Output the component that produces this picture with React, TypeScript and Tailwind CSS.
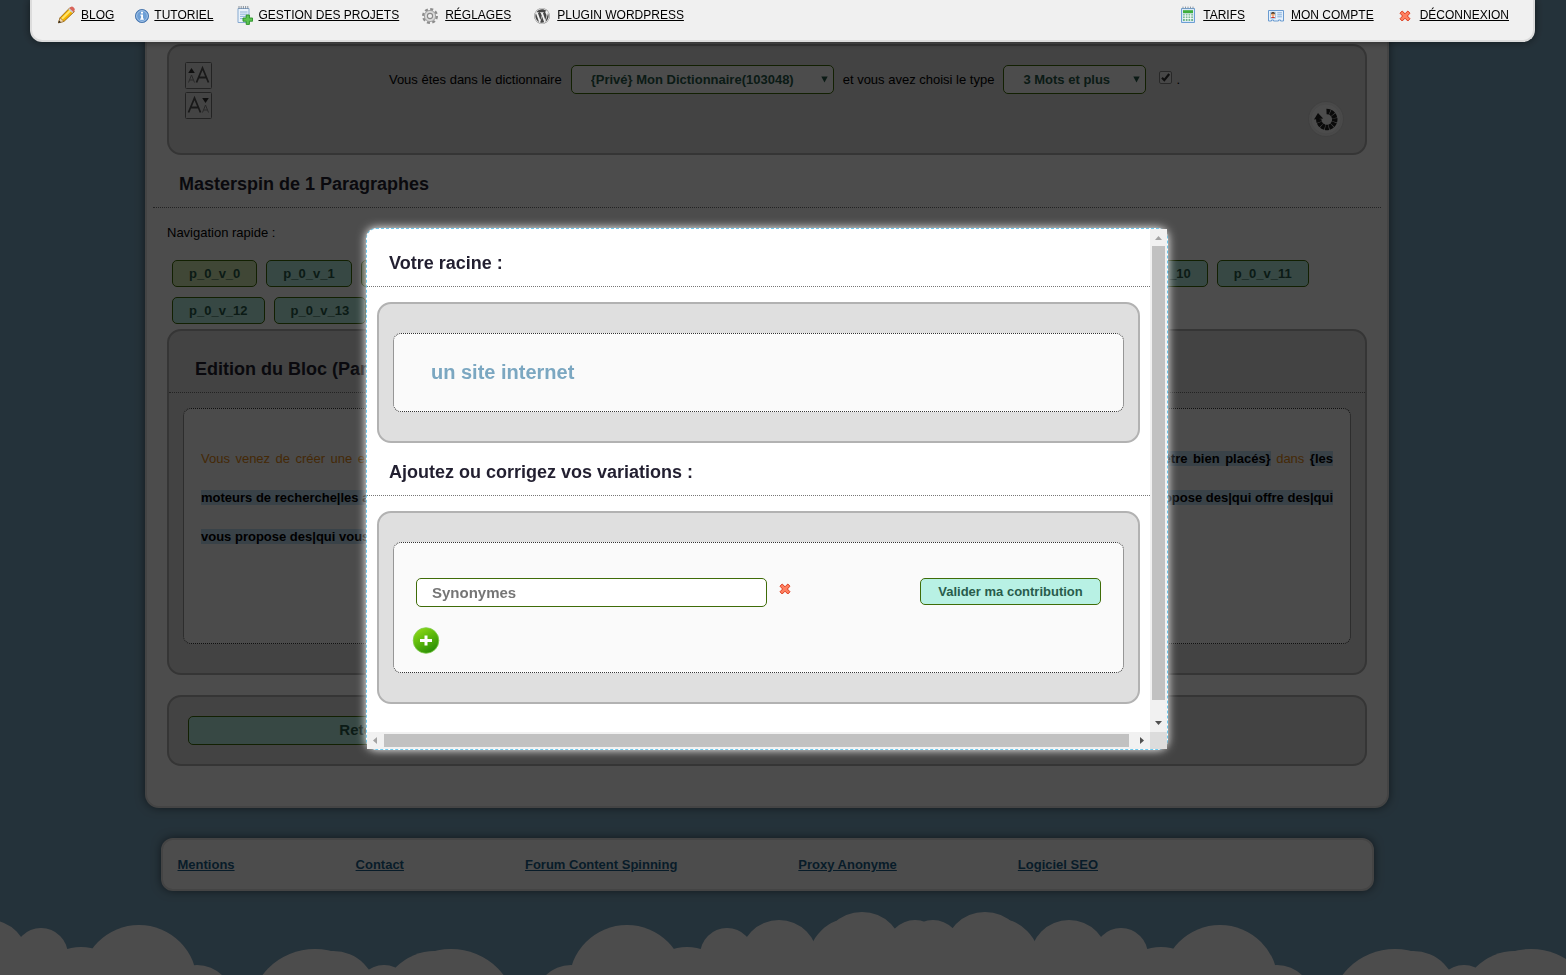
import React, { useState } from 'react';
import { FaWordpress } from 'react-icons/fa';

const variantes = [
  'p_0_v_0', 'p_0_v_1', 'p_0_v_2', 'p_0_v_3', 'p_0_v_4', 'p_0_v_5', 'p_0_v_6',
  'p_0_v_7', 'p_0_v_8', 'p_0_v_9', 'p_0_v_10', 'p_0_v_11', 'p_0_v_12', 'p_0_v_13',
];

const footerLinks = ['Mentions', 'Contact', 'Forum Content Spinning', 'Proxy Anonyme', 'Logiciel SEO'];

// [center x, top y, radius]
const clouds: [number, number, number][] = [
  [-11, 15, 39], [41, 23, 27], [81, 42, 50], [139, 20, 58], [197, 60, 36],
  [315, 44, 66], [333, 46, 44], [384, 60, 28], [451, 44, 66], [435, 46, 55],
  [571, 60, 36], [627, 20, 58], [687, 42, 50], [727, 23, 27], [779, 15, 39],
  [852, 13, 44], [862, 7, 41], [915, 15, 28], [933, 15, 28], [985, 7, 41],
  [996, 13, 44], [1069, 15, 39], [1121, 23, 27], [1161, 42, 50], [1220, 20, 58],
  [1277, 60, 36], [1395, 44, 66], [1413, 46, 44], [1464, 60, 28], [1531, 44, 66],
  [1515, 46, 55],
];

const PencilIcon = () => (
  <svg width="18" height="18" viewBox="0 0 18 18">
    <path d="M0.5 16.8 L2 11.8 L12 1.6 L16.4 5.6 L6 15.4 Z" fill="#f7b500" stroke="#8a5a10" strokeWidth="0.8" />
    <path d="M3.2 12.2 L12.4 3 L13.9 4.4 L4.6 13.6 Z" fill="#ffe56b" />
    <path d="M11 2.6 L12.4 1.2 Q14 0 15.4 1.2 L16.4 2.2 Q17.4 3.6 16.2 5 L15 6.4 Z" fill="#d9645a" />
    <path d="M10.3 3.3 L11.4 2.2 L15.4 6 L14.3 7.1 Z" fill="#c9ced6" />
    <path d="M0.5 16.8 L2 11.8 L6 15.4 Z" fill="#f3d7ae" stroke="#8a5a10" strokeWidth="0.5" />
    <path d="M0.3 17 L1.1 14.4 L3 16.2 Z" fill="#222" />
  </svg>
);

const InfoIcon = () => (
  <svg width="14" height="16" viewBox="0 0 14 16">
    <circle cx="7" cy="9" r="6.6" fill="#4f84c2" stroke="#3d6ea8" strokeWidth="0.8" />
    <circle cx="7" cy="9" r="5.4" fill="#6d9fd6" stroke="#b9d2ee" strokeWidth="0.8" />
    <path d="M6 4.8 h2 v1.8 h-2 z M5.4 7.6 h2.6 v4 h0.8 v1.2 h-3.6 v-1.2 h0.9 v-2.8 h-0.7 z" fill="#fff" />
  </svg>
);

const ProjectIcon = () => (
  <svg width="19" height="20" viewBox="0 0 19 20">
    <path d="M4 3.5 h11 v14 h-11 z" fill="#e9f2fb" stroke="#86a9d0" />
    <path d="M5 1 v3 M7.2 1 v3 M9.4 1 v3 M11.6 1 v3 M13.8 1 v3" stroke="#7d8894" strokeWidth="0.9" />
    <path d="M6 7 h7.5 M6 9.2 h7.5 M6 11.4 h7.5 M6 13.6 h5" stroke="#8fb2da" />
    <path d="M12.2 10 h3.2 v3 h3.2 v3.2 h-3.2 v3.2 h-3.2 v-3.2 h-3.2 v-3.2 h3.2 z" fill="#5cc352" stroke="#268e24" strokeWidth="0.9" />
  </svg>
);

const GearIcon = () => (
  <svg width="20" height="20" viewBox="0 0 20 20" className="mt-0.5">
    <circle cx="10" cy="10" r="6.8" fill="none" stroke="#8c8c8c" strokeWidth="2.4" strokeDasharray="3 2.34" />
    <circle cx="10" cy="10" r="5.6" fill="#d9d9d9" stroke="#9c9c9c" strokeWidth="0.9" />
    <circle cx="10" cy="10" r="2.6" fill="#f0f0f0" stroke="#8a8a8a" strokeWidth="1.1" />
  </svg>
);

const CalculatorIcon = () => (
  <svg width="20" height="18" viewBox="0 0 20 18">
    <path d="M3.5 2.5 h13 v14 h-13 z" fill="#d9e9f8" stroke="#6c9fd4" />
    <path d="M5 0.6 v2.4 M7.5 0.6 v2.4 M10 0.6 v2.4 M12.5 0.6 v2.4 M15 0.6 v2.4" stroke="#8898a8" />
    <path d="M5 4.2 h10 v3 h-10 z" fill="#3fae3c" />
    <path d="M5 8.2 h10 v6.8 h-10 z" fill="#6fb58c" />
    <path d="M5 10 h10 M5 12.4 h10 M7.3 8 v7 M10 8 v7 M12.7 8 v7" stroke="#fff" strokeWidth="0.9" />
  </svg>
);

const CardIcon = () => (
  <svg width="20" height="18" viewBox="0 0 20 18">
    <path d="M2.5 4.5 h15 v10.5 h-3 v-1 h-2 v1 h-5 v-1 h-2 v1 h-3 z" fill="#e4f0fc" stroke="#6a9bd0" />
    <path d="M4.5 6.3 h5 v6 h-5 z" fill="#fff" stroke="#7ba7d4" strokeWidth="0.6" />
    <circle cx="7" cy="8.6" r="1.8" fill="#e9a873" />
    <path d="M5 8 q0 -2 2 -2 q2 0 2 2 q-2 -1 -4 0 z" fill="#3b2a1c" />
    <path d="M5 12 q0 -1.6 2 -1.6 q2 0 2 1.6 z" fill="#c8372d" />
    <path d="M11.3 6.8 h4.6 M11.3 8.8 h4.6 M11.3 10.8 h4.6" stroke="#84aedb" />
  </svg>
);

const CrossShape = () => (
  <path
    d="M1 3.2 L3.2 1 L6 3.8 L8.8 1 L11 3.2 L8.4 6 L11 8.8 L8.8 11 L6 8.2 L3.2 11 L1 8.8 L3.6 6 Z"
    fill="#ff8060"
    stroke="#dc3c1e"
    strokeWidth="1"
    strokeLinejoin="round"
  />
);

const RoundArrowIcon = () => (
  <svg width="38" height="38" viewBox="0 0 38 38">
    <circle cx="19" cy="19" r="17.5" fill="#f4f4f4" stroke="#d6d6d6" />
    <circle cx="19" cy="19" r="15" fill="#fff" stroke="#f0f0f0" />
    <path d="M19.5 11.5 A8 8 0 1 1 11.8 19" fill="none" stroke="#222" strokeWidth="5.4" strokeDasharray="3.4 0.5" />
    <path d="M7 19.5 L11 13 L16.2 18.5 Z" fill="#222" />
  </svg>
);

const FontUpIcon = () => (
  <svg width="27" height="27" viewBox="0 0 27 27" fill="none" stroke="#555">
    <rect x="0.5" y="0.5" width="26" height="26" rx="1" fill="#e4e4e4" stroke="#777" />
    <path d="M11.5 20.5 L17.5 6 L23.5 20.5 M13.6 15.5 H21.4" strokeWidth="1.8" />
    <path d="M3.5 20.5 L6.5 13 L9.5 20.5 M4.6 18 H8.4" stroke="#888" />
    <path d="M3.2 11 L6.5 6 L9.8 11 Z" fill="#333" stroke="none" />
  </svg>
);

const FontDownIcon = () => (
  <svg width="27" height="27" viewBox="0 0 27 27" fill="none" stroke="#555">
    <rect x="0.5" y="0.5" width="26" height="26" rx="1" fill="#e4e4e4" stroke="#777" />
    <path d="M3.5 20.5 L9.5 6 L15.5 20.5 M5.6 15.5 H13.4" strokeWidth="1.8" />
    <path d="M17.5 20.5 L20.5 13 L23.5 20.5 M18.6 18 H22.4" stroke="#888" />
    <path d="M17.2 6 L23.8 6 L20.5 11 Z" fill="#333" stroke="none" />
  </svg>
);

interface NavItemProps {
  icon: React.ReactNode;
  children: React.ReactNode;
}

const NavItem: React.FC<NavItemProps> = ({ icon, children }) => (
  <a href="#" className="flex h-5 items-center gap-[5px] whitespace-nowrap">
    {icon}
    <span className="underline">{children}</span>
  </a>
);

const TopBar = () => (
  <nav className="fixed right-[31px] left-[30px] top-0 z-20 flex h-[42px] justify-between rounded-b-xl border-2 border-t-0 border-[#dcdcdc] bg-[#f0f0f0] px-6 pt-[5px] text-[12px] text-black shadow-[0_0_8px_rgba(0,0,0,0.5)]">
    <div className="flex gap-[21px] pl-0.5">
      <NavItem icon={<PencilIcon />}>BLOG</NavItem>
      <NavItem icon={<InfoIcon />}>TUTORIEL</NavItem>
      <NavItem icon={<ProjectIcon />}>GESTION DES PROJETS</NavItem>
      <NavItem icon={<GearIcon />}>RÉGLAGES</NavItem>
      <NavItem icon={<FaWordpress className="mt-0.5 h-4 w-5 text-[#464646]" />}>PLUGIN WORDPRESS</NavItem>
    </div>
    <div className="flex gap-[21px]">
      <NavItem icon={<CalculatorIcon />}>TARIFS</NavItem>
      <NavItem icon={<CardIcon />}>MON COMPTE</NavItem>
      <NavItem
        icon={
          <svg width="20" height="14" viewBox="-4 -2 20 14">
            <CrossShape />
          </svg>
        }
      >
        DÉCONNEXION
      </NavItem>
    </div>
  </nav>
);

interface SelectBoxProps {
  label: string;
  value: string;
  className: string;
}

const SelectBox: React.FC<SelectBoxProps> = ({ label, value, className }) => (
  <span className={`relative inline-block ${className}`}>
    <select
      aria-label={label}
      className="h-[29px] w-full appearance-none rounded-[5px] border border-[#3f6c08] bg-white pl-[19px] text-[13px] font-bold text-[#285c4b]"
    >
      <option>{value}</option>
    </select>
    <svg className="pointer-events-none absolute top-[11px] right-[6px]" width="7" height="7" viewBox="0 0 7 7">
      <path d="M0.3 0.5 H6.7 L3.5 6.5 Z" fill="#285c4b" />
    </svg>
  </span>
);

const DictionaryBox = () => (
  <section className="flex h-[111px] items-start rounded-[14px] border-2 border-[#b2b2b2] bg-[#dfdfdf] px-4 pt-4">
    <div className="flex flex-col gap-[3px]">
      <button aria-label="Agrandir le texte"><FontUpIcon /></button>
      <button aria-label="Réduire le texte"><FontDownIcon /></button>
    </div>
    <div className="mt-[3px] flex flex-1 items-center justify-center gap-[9px] pl-[50px] text-[13px]">
      <span>Vous êtes dans le dictionnaire</span>
      <SelectBox label="Dictionnaire" value="{Privé} Mon Dictionnaire(103048)" className="w-[263px]" />
      <span>et vous avez choisi le type</span>
      <SelectBox label="Type" value="3 Mots et plus" className="w-[143px]" />
      <label className="ml-1 flex items-end gap-1">
        <span className="relative mb-1 block h-[13px] w-[13px]">
          <input
            type="checkbox"
            defaultChecked
            aria-label="Activer"
            className="peer block h-[13px] w-[13px] appearance-none rounded-[2px] border border-[#888] bg-[#eee]"
          />
          <svg className="pointer-events-none absolute inset-0 hidden peer-checked:block" width="13" height="13" viewBox="0 0 13 13">
            <path d="M3 6.8 L5.3 9.2 L10.2 3" fill="none" stroke="#333" strokeWidth="2.2" />
          </svg>
        </span>
        <span className="leading-4">.</span>
      </label>
    </div>
    <button aria-label="Recharger" className="mt-[38px] mr-1">
      <RoundArrowIcon />
    </button>
  </section>
);

const Mark: React.FC<{ children: React.ReactNode }> = ({ children }) => (
  <b className="bg-[#c0dcf2] text-black">{children}</b>
);

const EditionBox = () => (
  <section className="mt-[5px] rounded-[14px] border-2 border-[#b2b2b2] bg-[#dfdfdf] pb-[29px]">
    <h2 className="h-[62px] border-b border-dotted border-[#777] px-[26px] pt-6 text-[18px] leading-7 font-bold text-[#221f30]">
      Edition du Bloc (Paragraphe 0)
    </h2>
    <div className="mx-3.5 mt-[15px] min-h-[236px] rounded-[8px] border border-dotted border-[#333] bg-[#fafafa] px-[17px] pt-[30px]">
      <p className="text-justify text-[13px] leading-[39px] text-[#e68a14]">
        Vous venez de créer une entreprise et vous souhaitez <Mark>{'{créer un site internet|avoir un site web}'}</Mark> pour{' '}
        <Mark>{'{être plus visibles|être présents|être bien référencés|être bien placés}'}</Mark> dans{' '}
        <Mark>
          {'{les moteurs de recherche|les annuaires de recherche|les résultats de recherche}'}
        </Mark>{' '}
        . Voici une agence{' '}
        <Mark>
          {'{spécialisée en référencement qui vous y aide et qui vous propose des|qui offre des|qui vous propose des|qui vous offre des}'}
        </Mark>{' '}
        services.
      </p>
    </div>
  </section>
);

const MainPanel = () => (
  <main className="w-full max-w-[1244px] rounded-b-[14px] border-2 border-t-0 border-[#e4e4e4] bg-white px-5 pt-11 pb-10 shadow-[0_0_10px_rgba(0,0,0,0.5)]">
    <DictionaryBox />
    <h2 className="-mx-3.5 h-[53px] border-b border-dotted border-[#777] px-[26px] pt-[15px] text-[18px] leading-7 font-bold text-[#221f30]">
      Masterspin de 1 Paragraphes
    </h2>
    <p className="mt-[15px] text-[13px] leading-5">Navigation rapide :</p>
    <div className="mt-[17px] flex flex-wrap gap-x-[9px] gap-y-2.5 pl-[5px]">
      {variantes.map((v, i) => (
        <button
          key={v}
          className={`h-[27px] rounded-[5px] border border-[#3f6c08] px-4 text-[13px] font-bold text-[#285c4b] ${
            i === 0 || i === 2 ? 'bg-[#d8efb4]' : 'bg-[#b8f1e4]'
          }`}
        >
          {v}
        </button>
      ))}
    </div>
    <EditionBox />
    <section className="mt-5 rounded-[14px] border-2 border-[#b2b2b2] bg-[#dfdfdf] px-[19px] py-[19px]">
      <button className="block h-[29px] w-[351px] rounded-[5px] border border-[#3f6c08] bg-[#b8f1e4] text-[15px] font-bold text-[#285c4b]">
        Retour
      </button>
    </section>
  </main>
);

const Footer = () => (
  <footer className="mt-[30px] flex h-[53px] w-full max-w-[1213px] items-center gap-[121px] rounded-xl border-2 border-[#e4e4e4] bg-white px-[15px] text-[13px] font-bold text-[#1d5f8a] shadow-[0_0_10px_rgba(0,0,0,0.5)]">
    {footerLinks.map((l) => (
      <a key={l} href="#" className="underline">{l}</a>
    ))}
  </footer>
);

const CloudBand = () => (
  <svg className="mt-auto block h-[70px] w-full" viewBox="0 0 1566 70" preserveAspectRatio="xMidYMax slice" fill="#fff">
    {clouds.map(([x, top, r], i) => (
      <circle key={i} cx={x} cy={top + r} r={r} />
    ))}
    <rect x="600" y="50" width="650" height="20" />
    <rect x="0" y="50" width="160" height="20" />
  </svg>
);

interface ModalHeadingProps {
  className: string;
  children: React.ReactNode;
}

const ModalHeading: React.FC<ModalHeadingProps> = ({ className, children }) => (
  <h2 className={`border-b border-dotted border-[#777] px-[22px] pb-[9px] text-[18px] leading-7 font-bold text-[#221f30] ${className}`}>
    {children}
  </h2>
);

const ModalBox: React.FC<{ children: React.ReactNode }> = ({ children }) => (
  <section className="mx-2.5 mt-[15px] rounded-[14px] border-2 border-[#b2b2b2] bg-[#dfdfdf] px-3.5 py-[29px]">
    <div className="rounded-[8px] border border-dotted border-[#333] bg-[#fafafa]">{children}</div>
  </section>
);

const SynonymModal = () => {
  const [rows, setRows] = useState<string[]>(['']);

  const updateRow = (index: number, value: string) => {
    setRows(rows.map((r, i) => (i === index ? value : r)));
  };

  return (
    <div
      role="dialog"
      aria-label="Variations"
      className="grid h-[522px] w-[802px] grid-cols-[1fr_17px] grid-rows-[1fr_17px] rounded-[10px] border border-dashed border-[#6cc8ec] bg-white shadow-[0_0_10px_#fff]"
    >
      <div className="overflow-hidden">
        <ModalHeading className="pt-5">Votre racine :</ModalHeading>
        <ModalBox>
          <p className="px-[37px] py-6 text-[20px] leading-[29px] font-bold text-[#7ba7c1]">un site internet</p>
        </ModalBox>
        <ModalHeading className="pt-[15px]">Ajoutez ou corrigez vos variations :</ModalHeading>
        <ModalBox>
          <div className="px-[22px] pt-[35px] pb-[18px]">
            <div className="flex items-start justify-between">
              <div className="flex flex-col gap-2">
                {rows.map((r, i) => (
                  <div key={i} className="flex items-start gap-3">
                    <input
                      type="text"
                      aria-label="Synonymes"
                      placeholder="Synonymes"
                      value={r}
                      onChange={(e) => updateRow(i, e.target.value)}
                      className="h-[29px] w-[351px] rounded-[5px] border border-[#3f6c08] bg-white px-[15px] text-[15px] font-bold text-[#285c4b] placeholder:text-[#757575]"
                    />
                    <button
                      aria-label="Supprimer"
                      onClick={() => setRows(rows.filter((_, j) => j !== i))}
                      className="mt-[5px]"
                    >
                      <svg width="12" height="12" viewBox="0 0 12 12">
                        <CrossShape />
                      </svg>
                    </button>
                  </div>
                ))}
              </div>
              <button className="h-[27px] w-[181px] rounded-[5px] border border-[#3f6c08] bg-[#b8f1e4] text-[13px] font-bold text-[#285c4b]">
                Valider ma contribution
              </button>
            </div>
            <button aria-label="Ajouter" onClick={() => setRows([...rows, ''])} className="mt-5 -ml-1 block">
              <svg width="28" height="27" viewBox="0 0 28 27">
                <defs>
                  <linearGradient id="plusFill" x1="0" y1="0" x2="0.6" y2="1">
                    <stop offset="0" stopColor="#9be01a" />
                    <stop offset="0.5" stopColor="#5fbb0c" />
                    <stop offset="1" stopColor="#2c8f06" />
                  </linearGradient>
                </defs>
                <circle cx="14" cy="13.5" r="12.8" fill="url(#plusFill)" stroke="#7ecb4a" strokeWidth="0.8" />
                <path d="M12.5 8.5 h3 v3.5 h4.5 v3 h-4.5 v3.5 h-3 v-3.5 h-4.5 v-3 h4.5 z" fill="#fff" />
              </svg>
            </button>
          </div>
        </ModalBox>
      </div>

      {/* scrollbars */}
      <div className="flex flex-col items-center bg-[#f1f1f1]">
        <svg width="17" height="17" viewBox="0 0 17 17"><path d="M5 11 L8.5 7 L12 11 Z" fill="#a3a3a3" /></svg>
        <div className="w-[13px] flex-1 bg-[#c1c1c1]" />
        <svg className="mt-[15px]" width="17" height="17" viewBox="0 0 17 17"><path d="M5 6 L8.5 10 L12 6 Z" fill="#505050" /></svg>
      </div>
      <div className="flex items-center bg-[#f1f1f1]">
        <svg width="17" height="17" viewBox="0 0 17 17"><path d="M10 5 L6 8.5 L10 12 Z" fill="#a3a3a3" /></svg>
        <div className="h-[13px] flex-1 bg-[#c1c1c1]" />
        <svg className="ml-1" width="17" height="17" viewBox="0 0 17 17"><path d="M7 5 L11 8.5 L7 12 Z" fill="#505050" /></svg>
      </div>
      <div className="bg-[#dcdcdc]" />
    </div>
  );
};

export default function App() {
  return (
    <div className="min-h-screen font-['Liberation_Sans',Arial,sans-serif] text-black">
      <TopBar />
      <div className="flex min-h-screen flex-col items-center bg-[#7ba7c1]">
        <div className="flex w-full flex-col items-center pr-8">
          <MainPanel />
          <Footer />
        </div>
        <CloudBand />
      </div>
      <div className="fixed inset-0 z-10 flex items-center justify-center bg-black/70 pt-[3px] pr-8">
        <SynonymModal />
      </div>
    </div>
  );
}
